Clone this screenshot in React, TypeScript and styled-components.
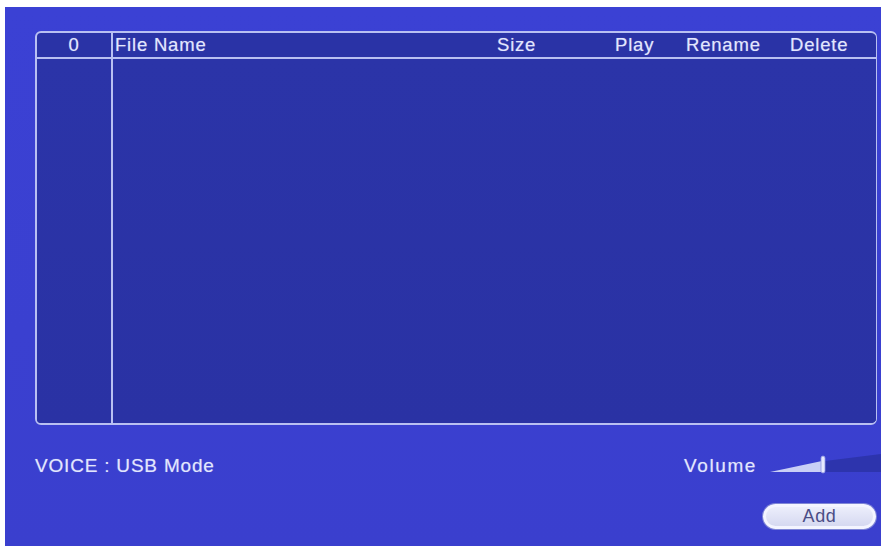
import React from 'react';
import styled, { createGlobalStyle } from 'styled-components';

const GlobalStyle = createGlobalStyle`
  html, body {
    margin: 0;
    padding: 0;
    background: #ffffff;
    overflow: hidden;
  }
  body {
    font-family: "Liberation Sans", Arial, sans-serif;
  }
`;

const Screen = styled.div`
  width: 881px;
  height: 551px;
  padding: 7px 0 0 5px;
  box-sizing: border-box;
`;

const Panel = styled.div`
  width: 876px;
  height: 539px;
  box-sizing: border-box;
  padding: 24px 4px 0 30px;
  background: linear-gradient(180deg, #3b41d4 0%, #3a40d0 60%, #3a3fce 100%);
  display: flex;
  flex-direction: column;
`;

const Table = styled.div`
  height: 394px;
  border: 2px solid #b9c0f2;
  border-right-width: 1px;
  border-radius: 6px;
  background: #2a33a6;
  display: grid;
  grid-template-rows: 26px 1fr;
  box-sizing: border-box;
  overflow: hidden;
`;

const HeaderRow = styled.div`
  display: grid;
  grid-template-columns: 76px 382px 118px 71px 104px 1fr;
  border-bottom: 2px solid #b9c0f2;
`;

const HeaderCell = styled.div<{ $center?: boolean; $divider?: boolean }>`
  display: flex;
  align-items: center;
  justify-content: ${(p) => (p.$center ? 'center' : 'flex-start')};
  padding-left: ${(p) => (p.$center ? '0' : '2px')};
  font-size: 18.5px;
  letter-spacing: 0.8px;
  color: #e2e6fd;
  text-shadow: 0 0 1px rgba(226, 230, 253, 0.5);
  border-right: ${(p) => (p.$divider ? '2px solid #b9c0f2' : 'none')};
  white-space: nowrap;
`;

const Body = styled.div`
  display: grid;
  grid-template-columns: 76px 1fr;
`;

const BodyColumn = styled.div<{ $divider?: boolean }>`
  border-right: ${(p) => (p.$divider ? '2px solid #b9c0f2' : 'none')};
  background: linear-gradient(180deg, #2b34a8 0%, #2a32a4 100%);
`;

const FooterRow = styled.div`
  margin-top: 28px;
  height: 26px;
  display: flex;
  align-items: center;
  justify-content: space-between;
`;

const Label = styled.span<{ $spacing?: number }>`
  font-size: 19px;
  letter-spacing: ${(p) => p.$spacing ?? 0.8}px;
  color: #e2e6fd;
  text-shadow: 0 0 1px rgba(226, 230, 253, 0.5);
  white-space: nowrap;
`;

const VolumeGroup = styled.div`
  display: flex;
  align-items: center;
  gap: 13px;
  margin-right: -4px;
`;

const ButtonRow = styled.div`
  margin-top: 25px;
  display: flex;
  justify-content: flex-end;
  padding-right: 1px;
`;

const PillButton = styled.button`
  width: 113px;
  height: 25px;
  border: 3px solid #f4f5ff;
  border-radius: 13px;
  background: linear-gradient(180deg, #eceefb 0%, #d6d9f1 100%);
  box-shadow: 0 0 0 1px #7f86d6;
  color: #4b4d86;
  font-family: "Liberation Sans", Arial, sans-serif;
  font-size: 18px;
  letter-spacing: 0.6px;
  padding: 0;
  display: flex;
  align-items: center;
  justify-content: center;
`;

const VolumeSlider: React.FC = () => (
  <svg width="111" height="24" viewBox="0 0 111 24">
    <polygon points="0,18 52,7 52,18" fill="#c9cff6" />
    <polygon points="55,7 111,0 111,18 55,18" fill="#2d34ad" />
    <rect x="51" y="2" width="4" height="17" rx="2" fill="#e6e9fd" stroke="#8e95e2" strokeWidth="0.8" />
  </svg>
);

const columns = ['File Name', 'Size', 'Play', 'Rename', 'Delete'];

const App: React.FC = () => {
  return (
    <>
      <GlobalStyle />
      <Screen>
        <Panel>
          <Table>
            <HeaderRow>
              <HeaderCell $center $divider>0</HeaderCell>
              {columns.map((c) => (
                <HeaderCell key={c}>{c}</HeaderCell>
              ))}
            </HeaderRow>
            <Body>
              <BodyColumn $divider />
              <BodyColumn />
            </Body>
          </Table>
          <FooterRow>
            <Label>VOICE : USB Mode</Label>
            <VolumeGroup>
              <Label $spacing={1.6}>Volume</Label>
              <VolumeSlider />
            </VolumeGroup>
          </FooterRow>
          <ButtonRow>
            <PillButton>Add</PillButton>
          </ButtonRow>
        </Panel>
      </Screen>
    </>
  );
};

export default App;
